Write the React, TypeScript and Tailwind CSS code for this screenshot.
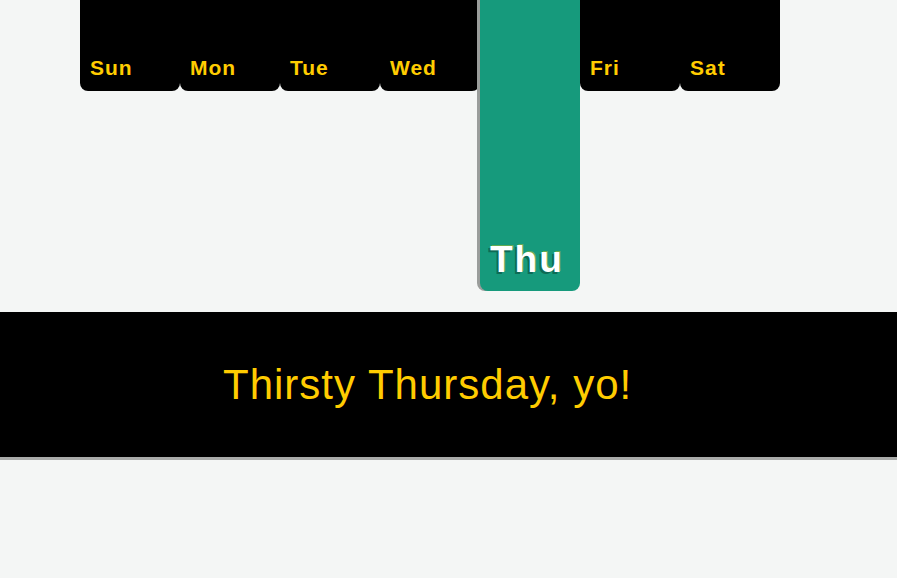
const days = ["Sun", "Mon", "Tue", "Wed", "Thu", "Fri", "Sat"];
const today = "Thu";

export default function App() {
  return (
    <div className="min-h-[578px] w-full bg-[#f4f6f5] font-['Liberation_Sans',Arial,sans-serif]">
      <nav className="flex items-start pl-[80px]">
        {days.map((d) =>
          d === today ? (
            <div
              key={d}
              className="flex h-[291px] w-[100px] items-end rounded-b-[8px] bg-[#169a7c] px-[10px] pb-[13px] shadow-[-3px_0_0_#9a9d9b]"
            >
              <span className="text-[37px] font-bold leading-none tracking-[2px] text-white [text-shadow:-2px_2px_0_#0d6b55,1px_-1px_0_rgba(255,204,0,0.35)]">
                {d}
              </span>
            </div>
          ) : (
            <div
              key={d}
              className="flex h-[91px] w-[100px] items-end rounded-b-[8px] bg-black px-[10px] pb-[13px]"
            >
              <span className="text-[21px] font-bold leading-none tracking-[1px] text-[#ffcc00]">
                {d}
              </span>
            </div>
          )
        )}
      </nav>
      <section className="mt-[21px] flex h-[148px] items-center border-b-[3px] border-[#a9aba9] bg-black pl-[223px]">
        <h1 className="text-[42px] font-normal leading-none tracking-[1px] text-[#ffcc00]">
          Thirsty Thursday, yo!
        </h1>
      </section>
    </div>
  );
}
